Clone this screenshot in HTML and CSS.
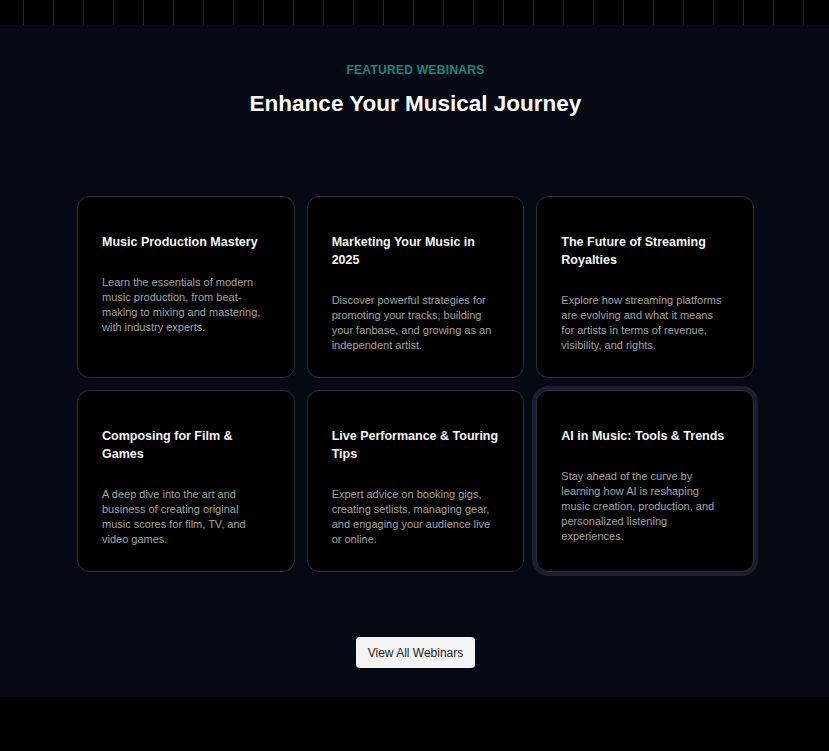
FILE: index.html
```html
<!DOCTYPE html>
<html lang="en">
<head>
<meta charset="utf-8">
<title>Featured Webinars</title>
<link rel="stylesheet" href="styles.css">
</head>
<body>
<div class="keys"></div>
<section class="webinars">
  <p class="eyebrow">FEATURED WEBINARS</p>
  <h2 class="heading">Enhance Your Musical Journey</h2>
  <div class="grid">
    <article class="card">
      <h3 class="card-title">Music Production Mastery</h3>
      <p class="card-text">Learn the essentials of modern music production, from beat-making to mixing and mastering, with industry experts.</p>
    </article>
    <article class="card">
      <h3 class="card-title">Marketing Your Music in 2025</h3>
      <p class="card-text">Discover powerful strategies for promoting your tracks, building your fanbase, and growing as an independent artist.</p>
    </article>
    <article class="card">
      <h3 class="card-title">The Future of Streaming Royalties</h3>
      <p class="card-text">Explore how streaming platforms are evolving and what it means for artists in terms of revenue, visibility, and rights.</p>
    </article>
    <article class="card">
      <h3 class="card-title">Composing for Film &amp; Games</h3>
      <p class="card-text">A deep dive into the art and business of creating original music scores for film, TV, and video games.</p>
    </article>
    <article class="card">
      <h3 class="card-title">Live Performance &amp; Touring Tips</h3>
      <p class="card-text">Expert advice on booking gigs, creating setlists, managing gear, and engaging your audience live or online.</p>
    </article>
    <article class="card card-focus">
      <h3 class="card-title">AI in Music: Tools &amp; Trends</h3>
      <p class="card-text">Stay ahead of the curve by learning how AI is reshaping music creation, production, and personalized listening experiences.</p>
    </article>
  </div>
  <div class="actions">
    <button class="btn" type="button">View All Webinars</button>
  </div>
</section>
<footer class="footer"></footer>
</body>
</html>
```
FILE: styles.css
```css
* { box-sizing: border-box; }
html, body { margin: 0; padding: 0; }
body {
  background: #010101;
  font-family: "Liberation Sans", Arial, sans-serif;
  color: #f2f2f2;
}
.keys {
  height: 25px;
  background-color: #000;
  background-image: repeating-linear-gradient(to right, transparent 0 29px, #262626 29px 30px);
  background-position: -6px 0;
}
.webinars {
  background: #050913;
  padding: 37px 0 29px 2px;
  display: flex;
  flex-direction: column;
  align-items: center;
}
.eyebrow {
  margin: 0;
  font-size: 12px;
  line-height: 16px;
  font-weight: 700;
  letter-spacing: 0.3px;
  color: #13897c;
}
.heading {
  margin: 12px 0 0;
  font-size: 22.5px;
  line-height: 28px;
  font-weight: 700;
  color: #fff;
}
.grid {
  margin-top: 78px;
  width: 677px;
  display: grid;
  grid-template-columns: repeat(3, 1fr);
  gap: 12px;
}
.card {
  background: #000;
  border: 1px solid #2f2f33;
  border-radius: 12px;
  padding: 36px 24px 24px;
}
.card-focus {
  box-shadow: 0 0 0 4px #18202f;
}
.card-title {
  margin: 0;
  font-size: 12.5px;
  line-height: 18px;
  font-weight: 700;
  color: #f5f5f5;
}
.card-text {
  margin: 24px 0 0;
  font-size: 11px;
  line-height: 15px;
  padding-right: 2px;
  color: #a3a3a3;
}
.actions {
  margin-top: 65px;
}
.btn {
  background: #f3f3f3;
  border: none;
  border-radius: 4px;
  height: 31px;
  padding: 0 12px;
  font-family: "Liberation Sans", Arial, sans-serif;
  font-size: 12px;
  color: #222;
  cursor: pointer;
}
.footer {
  height: 54px;
  background: #010101;
}
```
